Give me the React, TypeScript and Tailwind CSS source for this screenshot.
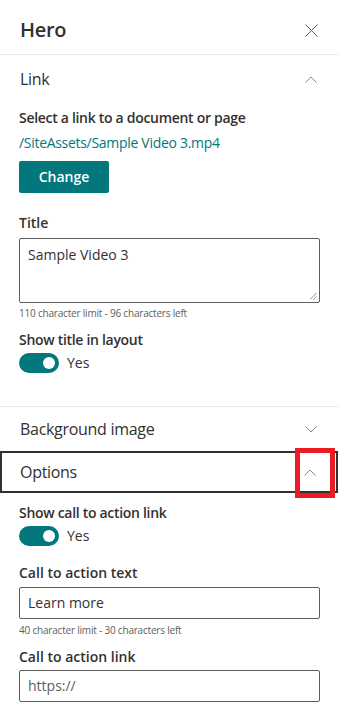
import React from "react";

const TEAL = "bg-[#03787c]";

function ChevronUp({ className = "" }: { className?: string }) {
  return (
    <svg width="12" height="7" viewBox="0 0 12 7" className={className} fill="none">
      <path d="M0.5 6.5 L6 1 L11.5 6.5" stroke="#8a8886" strokeWidth="1" />
    </svg>
  );
}

function ChevronDown({ className = "" }: { className?: string }) {
  return (
    <svg width="12" height="7" viewBox="0 0 12 7" className={className} fill="none">
      <path d="M0.5 0.5 L6 6 L11.5 0.5" stroke="#8a8886" strokeWidth="1" />
    </svg>
  );
}

function Toggle() {
  return (
    <div className="flex items-center gap-2 h-5">
      <div className={`w-10 h-5 rounded-full ${TEAL} flex items-center justify-end pr-[4px]`}>
        <div className="w-3 h-3 rounded-full bg-white" />
      </div>
      <span className="text-sm text-[#323130]">Yes</span>
    </div>
  );
}

function Label({ children, className = "" }: { children: React.ReactNode; className?: string }) {
  return (
    <div className={`text-sm font-semibold text-[#323130] leading-5 ${className}`}>{children}</div>
  );
}

export default function App() {
  return (
    <div
      className="w-[339px] h-[721px] bg-white overflow-hidden text-[#323130]"
      style={{ fontFamily: '"Open Sans", "Liberation Sans", sans-serif' }}
    >
      {/* Header */}
      <div className="h-[55px] flex items-center justify-between pl-5 pr-[21px] border-b border-[#edebe9]">
        <h1 className="text-xl font-semibold leading-6 pt-[5px] tracking-[-0.3px]">Hero</h1>
        <svg width="13" height="13" viewBox="0 0 13 13" className="mt-[6px]">
          <path d="M0.5 0.5 L12.5 12.5 M12.5 0.5 L0.5 12.5" stroke="#605e5c" strokeWidth="1" />
        </svg>
      </div>

      {/* Link section */}
      <div className="h-12 flex items-center justify-between pl-5 pr-[22px]">
        <span className="text-base leading-5 tracking-[-0.3px]">Link</span>
        <ChevronUp />
      </div>
      <div className="px-[19px] pb-[33px]">
        <Label className="mt-[5px] tracking-[-0.3px]">Select a link to a document or page</Label>
        <div className="text-sm leading-5 text-[#03787c] mt-[5px] tracking-[-0.3px]">/SiteAssets/Sample Video 3.mp4</div>
        <button className={`mt-[8px] w-[90px] h-8 rounded-[2px] ${TEAL} text-white text-sm font-semibold`}>
          Change
        </button>
        <Label className="mt-5">Title</Label>
        <div className="relative mt-[5px] h-[65px] border border-[#605e5c] rounded-[2px] px-2 pt-[6px] text-sm leading-5">
          Sample Video 3
          <svg width="8" height="8" viewBox="0 0 8 8" className="absolute right-[2px] bottom-[2px]">
            <path d="M7.5 1 L1 7.5 M7.5 4.5 L4.5 7.5" stroke="#8a8886" strokeWidth="1" />
          </svg>
        </div>
        <div className="mt-[3px] text-[10px] leading-[14px] text-[#605e5c] tracking-[-0.2px]">
          110 character limit - 96 characters left
        </div>
        <Label className="mt-[10px] tracking-[-0.3px]">Show title in layout</Label>
        <div className="mt-[3px]">
          <Toggle />
        </div>
      </div>

      <div className="border-t border-[#edebe9]" />

      {/* Background image */}
      <div className="h-[44px] flex items-center justify-between pl-5 pr-[22px]">
        <span className="text-base leading-5 tracking-[-0.3px]">Background image</span>
        <ChevronDown />
      </div>

      {/* Options (focused) */}
      <div className="relative w-[338px] h-[42px] border-2 border-[#323130] flex items-center justify-between pl-[18px] pr-[20px]">
        <span className="text-base leading-5 tracking-[-0.3px]">Options</span>
        <ChevronUp />
        <div className="absolute left-[293px] top-[-5px] w-[40px] h-[50px] border-[5px] border-[#ed1c24]" />
      </div>

      <div className="px-[19px]">
        <Label className="mt-[10px] tracking-[-0.3px]">Show call to action link</Label>
        <div className="mt-[3px]">
          <Toggle />
        </div>
        <Label className="mt-[17px]">Call to action text</Label>
        <div className="mt-[4px] h-8 border border-[#605e5c] rounded-[2px] px-2 flex items-center text-sm">
          Learn more
        </div>
        <div className="mt-[4px] text-[10px] leading-[14px] text-[#605e5c] tracking-[-0.2px]">
          40 character limit - 30 characters left
        </div>
        <Label className="mt-[10px]">Call to action link</Label>
        <div className="mt-[3px] h-8 border border-[#605e5c] rounded-[2px] px-2 flex items-center text-sm text-[#605e5c]">
          https://
        </div>
      </div>
    </div>
  );
}
